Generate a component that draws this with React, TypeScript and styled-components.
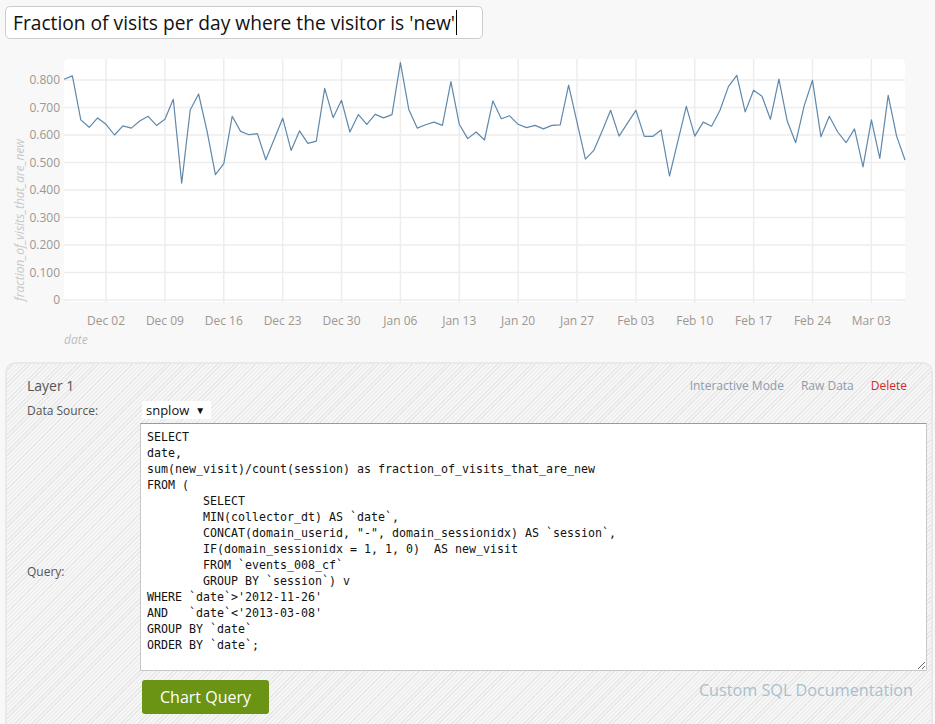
import React from "react";
import styled, { createGlobalStyle } from "styled-components";

const GlobalStyle = createGlobalStyle`
  html, body { margin: 0; padding: 0; background: #f8f8f8; }
  body { font-family: "Open Sans", "Liberation Sans", sans-serif; color: #333; overflow: hidden; }
  #root { width: 935px; height: 724px; overflow: hidden; }
`;

const Page = styled.div`
  display: flex;
  flex-direction: column;
  width: 935px;
`;

const Header = styled.div`
  padding: 6px 0 0 5px;
`;

const TitleBox = styled.div`
  box-sizing: border-box;
  width: 478px;
  height: 33px;
  background: #fff;
  border: 1px solid #cccccc;
  border-radius: 5px;
  padding: 0 0 0 7px;
  display: flex;
  align-items: center;
  font-size: 19.2px;
  color: #111;
  white-space: nowrap;
`;

const Caret = styled.span`
  display: inline-block;
  width: 1px;
  height: 25px;
  background: #000;
  margin-left: 1px;
`;

const ChartSvg = styled.svg`
  display: block;
  margin-top: 11px;
`;

const Panel = styled.div`
  box-sizing: border-box;
  margin: 7px 0 0 5px;
  width: 928px;
  height: 380px;
  border: 2px solid #e9e9e9;
  border-radius: 10px;
  background-color: #f4f4f4;
  background-image: repeating-linear-gradient(
    -45deg,
    #f6f6f6 0px,
    #f6f6f6 2px,
    #e7e7e7 2px,
    #e7e7e7 3px
  );
  padding: 11px 4px 0 20px;
`;

const PanelHead = styled.div`
  display: flex;
  align-items: center;
  justify-content: space-between;
  padding-right: 20px;
  height: 20px;
`;

const LayerTitle = styled.div`
  font-size: 14px;
  color: #555;
`;

const Links = styled.div`
  display: flex;
  gap: 17px;
  font-size: 12px;
`;

const Link = styled.span<{ $danger?: boolean }>`
  color: ${(p) => (p.$danger ? "#d42a2a" : "#8e9bab")};
`;

const Form = styled.div`
  display: grid;
  grid-template-columns: 113px 1fr;
  grid-template-rows: 18px 248px 44px;
  row-gap: 4px;
  margin-top: 6px;
`;

const Label = styled.div<{ $span?: number }>`
  font-size: 12px;
  color: #555;
  align-self: center;
  grid-row: ${(p) => (p.$span ? `span ${p.$span}` : "auto")};
`;

const Select = styled.div`
  justify-self: start;
  margin-left: 2px;
  background: #fff;
  height: 18px;
  padding: 0 6px 0 4px;
  display: flex;
  align-items: center;
  gap: 6px;
  font-size: 13px;
  color: #111;
`;

const Arrow = styled.span`
  font-size: 10px;
  color: #111;
`;

const QueryArea = styled.textarea`
  box-sizing: border-box;
  width: 787px;
  height: 248px;
  margin: 0;
  border: 1px solid #c8c8c8;
  border-top-color: #9a9a9a;
  background: #fff;
  padding: 5px 6px;
  font-family: "DejaVu Sans Mono", "Liberation Mono", monospace;
  font-size: 11.63px;
  line-height: 16px;
  color: #111;
  tab-size: 8;
  resize: both;
  outline: none;
  white-space: pre;
  overflow: hidden;
`;

const ActionRow = styled.div`
  display: flex;
  align-items: flex-start;
  justify-content: space-between;
  padding: 5px 14px 0 2px;
`;

const ChartButton = styled.button`
  background: #6b9414;
  color: #fff;
  border: none;
  border-radius: 3px;
  height: 34px;
  padding: 0 18px;
  font-family: "Open Sans", "Liberation Sans", sans-serif;
  font-size: 16px;
  cursor: pointer;
`;

const DocLink = styled.span`
  color: #a9bfcc;
  font-size: 16.2px;
  margin-top: -1px;
`;

const values = [
  0.803, 0.815, 0.655, 0.628, 0.662, 0.639, 0.6, 0.633, 0.625, 0.651, 0.668,
  0.635, 0.657, 0.73, 0.425, 0.691, 0.749, 0.615, 0.456, 0.496, 0.668, 0.613,
  0.601, 0.605, 0.51, 0.585, 0.661, 0.544, 0.615, 0.57, 0.578, 0.77, 0.663,
  0.726, 0.611, 0.674, 0.639, 0.675, 0.662, 0.674, 0.863, 0.693, 0.625, 0.637,
  0.647, 0.635, 0.794, 0.639, 0.587, 0.611, 0.582, 0.724, 0.659, 0.67, 0.639,
  0.627, 0.635, 0.622, 0.635, 0.637, 0.781, 0.647, 0.512, 0.544, 0.615, 0.69,
  0.596, 0.643, 0.69, 0.595, 0.595, 0.618, 0.451, 0.578, 0.704, 0.596, 0.647,
  0.632, 0.69, 0.776, 0.817, 0.684, 0.763, 0.741, 0.657, 0.803, 0.65, 0.572,
  0.705, 0.799, 0.594, 0.668, 0.611, 0.572, 0.622, 0.484, 0.655, 0.515, 0.744,
  0.596, 0.509,
];

const weeks = [
  "Dec 02", "Dec 09", "Dec 16", "Dec 23", "Dec 30", "Jan 06", "Jan 13",
  "Jan 20", "Jan 27", "Feb 03", "Feb 10", "Feb 17", "Feb 24", "Mar 03",
];

const PLOT_L = 64;
const PLOT_R = 905;
const PLOT_T = 9;
const ZERO_Y = 250;
const PX_PER_UNIT = 275;
const step = (PLOT_R - PLOT_L) / (values.length - 1);
const xAt = (i: number) => PLOT_L + i * step;
const yAt = (v: number) => ZERO_Y - v * PX_PER_UNIT;

function Chart() {
  const path = values
    .map((v, i) => `${i === 0 ? "M" : "L"}${xAt(i).toFixed(1)},${yAt(v).toFixed(1)}`)
    .join(" ");
  const yTicks = [0, 0.1, 0.2, 0.3, 0.4, 0.5, 0.6, 0.7, 0.8];
  return (
    <ChartSvg width={935} height={305} viewBox="0 0 935 305">
      <rect x={PLOT_L} y={PLOT_T} width={PLOT_R - PLOT_L} height={ZERO_Y + 2 - PLOT_T} rx={5} fill="#fff" />
      {yTicks.map((t) => (
        <g key={t}>
          <line x1={PLOT_L} x2={PLOT_R} y1={yAt(t)} y2={yAt(t)} stroke="#ededed" strokeWidth={1.5} />
          <text
            x={60}
            y={yAt(t) + 4}
            textAnchor="end"
            fontSize={12}
            fill="#9d9791"
            fontFamily="Open Sans, Liberation Sans, sans-serif"
          >
            {t === 0 ? "0" : t.toFixed(3)}
          </text>
        </g>
      ))}
      {weeks.map((w, k) => {
        const x = xAt(5 + 7 * k);
        return (
          <g key={w}>
            <line x1={x} x2={x} y1={PLOT_T} y2={ZERO_Y + 3} stroke="#ededed" strokeWidth={1.5} />
            <text
              x={x}
              y={275}
              textAnchor="middle"
              fontSize={12}
              fill="#9d9791"
              fontFamily="Open Sans, Liberation Sans, sans-serif"
            >
              {w}
            </text>
          </g>
        );
      })}
      <path d={path} fill="none" stroke="#5f88ab" strokeWidth={1.2} strokeLinejoin="round" />
      <text
        x={64}
        y={294}
        fontSize={12}
        fontStyle="italic"
        fill="#bdbdbd"
        fontFamily="Open Sans, Liberation Sans, sans-serif"
      >
        date
      </text>
      <text
        transform="translate(24,170) rotate(-90)"
        textAnchor="middle"
        fontSize={12}
        fontStyle="italic"
        fill="#c8c8c8"
        fontFamily="Open Sans, Liberation Sans, sans-serif"
      >
        fraction_of_visits_that_are_new
      </text>
    </ChartSvg>
  );
}

const SQL = [
  "SELECT",
  "date,",
  "sum(new_visit)/count(session) as fraction_of_visits_that_are_new",
  "FROM (",
  "\tSELECT",
  "\tMIN(collector_dt) AS `date`,",
  '\tCONCAT(domain_userid, "-", domain_sessionidx) AS `session`,',
  "\tIF(domain_sessionidx = 1, 1, 0)  AS new_visit",
  "\tFROM `events_008_cf`",
  "\tGROUP BY `session`) v",
  "WHERE `date`>'2012-11-26'",
  "AND   `date`<'2013-03-08'",
  "GROUP BY `date`",
  "ORDER BY `date`;",
].join("\n");

export default function App() {
  return (
    <>
      <GlobalStyle />
      <Page>
        <Header>
          <TitleBox>
            Fraction of visits per day where the visitor is 'new'
            <Caret />
          </TitleBox>
        </Header>
        <Chart />
        <Panel>
          <PanelHead>
            <LayerTitle>Layer 1</LayerTitle>
            <Links>
              <Link>Interactive Mode</Link>
              <Link>Raw Data</Link>
              <Link $danger>Delete</Link>
            </Links>
          </PanelHead>
          <Form>
            <Label>Data Source:</Label>
            <Select>
              snplow <Arrow>▼</Arrow>
            </Select>
            <Label $span={2}>Query:</Label>
            <QueryArea readOnly value={SQL} spellCheck={false} />
            <ActionRow>
              <ChartButton>Chart Query</ChartButton>
              <DocLink>Custom SQL Documentation</DocLink>
            </ActionRow>
          </Form>
        </Panel>
      </Page>
    </>
  );
}
